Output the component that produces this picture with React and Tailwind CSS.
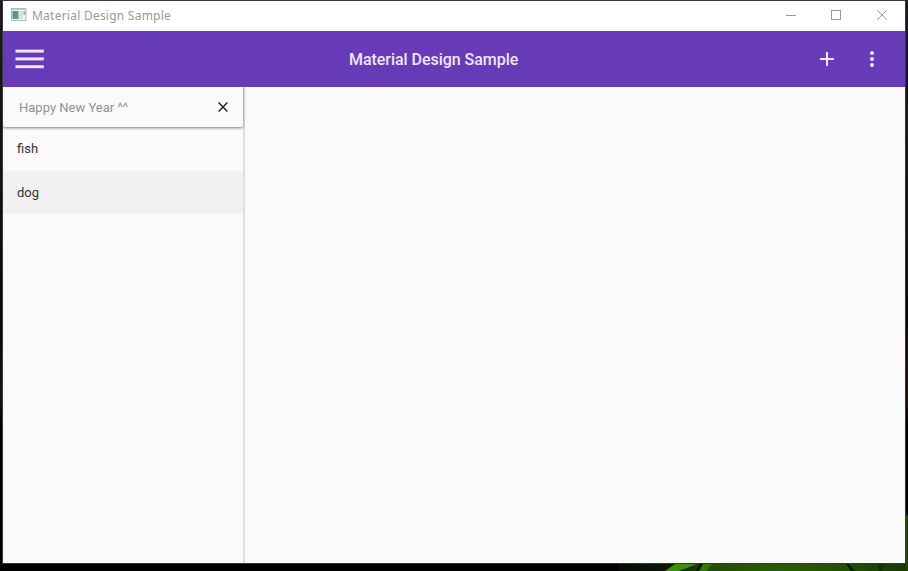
import React from "react";

function Wallpaper() {
  return (
    <svg className="absolute inset-0" width="908" height="571" aria-hidden="true">
      <defs>
        <linearGradient id="side" x1="0" y1="0" x2="0" y2="1">
          <stop offset="0" stopColor="#1b1b20" />
          <stop offset="0.35" stopColor="#101114" />
          <stop offset="0.55" stopColor="#0c0806" />
          <stop offset="0.7" stopColor="#1d0f08" />
          <stop offset="0.75" stopColor="#000000" />
          <stop offset="1" stopColor="#000000" />
        </linearGradient>
        <linearGradient id="leaf" x1="0" y1="0" x2="1" y2="0">
          <stop offset="0" stopColor="#050a02" />
          <stop offset="0.18" stopColor="#0c1606" />
          <stop offset="0.3" stopColor="#234a0a" />
          <stop offset="0.55" stopColor="#2c5a06" />
          <stop offset="0.8" stopColor="#244d05" />
          <stop offset="1" stopColor="#173803" />
        </linearGradient>
      </defs>
      <rect width="908" height="571" fill="url(#side)" />
      <rect x="618" y="564" width="290" height="7" fill="url(#leaf)" />
      <path d="M675 564h22l-18 7h-14z" fill="#418c0c" />
      <path d="M703 564h9l-6 7h-7z" fill="#35790a" />
      <path d="M699 564h4l-4 7h-3zM846 564h3l6 7h-4z" fill="#0a1c02" />
      <path d="M878 564h8l-4 7h-3z" fill="#133004" />
      <rect x="906" y="515" width="2" height="56" fill="#1d4405" />
    </svg>
  );
}

function TitleBar() {
  return (
    <div className="flex h-[30px] items-center bg-white text-[#999999]">
      <svg className="mb-0.5 ml-2 shrink-0" width="16" height="14" viewBox="0 0 16 14">
        <defs>
          <linearGradient id="pane" x1="0" y1="0" x2="1" y2="1">
            <stop offset="0" stopColor="#5a86ad" />
            <stop offset="1" stopColor="#55a377" />
          </linearGradient>
        </defs>
        <rect x="0.5" y="0.5" width="14.5" height="12" fill="#f4f4f4" stroke="#b3b8bc" />
        <rect x="1" y="1" width="14" height="1" fill="#c9cdd1" />
        <rect x="1.5" y="3" width="6" height="8" fill="url(#pane)" />
        <rect x="8" y="3" width="4" height="8" fill="#dedede" />
        <rect x="12.5" y="3" width="2" height="4" fill="#8fb8a0" />
      </svg>
      <span className="ml-[5px] whitespace-nowrap font-['Noto_Sans',sans-serif] text-[12px] leading-[16px] tracking-[0.24px]">
        Material Design Sample
      </span>
      <svg className="mb-0.5 ml-auto mr-[17px]" width="102" height="10" fill="none" stroke="#999999" shapeRendering="crispEdges">
        <path d="M0 5.5h10" />
        <rect x="45.5" y="0.5" width="9" height="9" />
        <path d="M91.2 0.2l9.6 9.6M100.8 0.2l-9.6 9.6" shapeRendering="auto" />
      </svg>
    </div>
  );
}

function AppBar() {
  return (
    <div className="flex h-14 items-center bg-[#673ab7] text-[#ede7f6]">
      <svg className="ml-3 shrink-0" width="30" height="20" fill="currentColor">
        <rect x="0.5" y="0.6" width="28.3" height="3" />
        <rect x="0.5" y="8.4" width="28.3" height="3" />
        <rect x="0.5" y="16.2" width="28.3" height="3" />
      </svg>
      <h1 className="ml-[304px] whitespace-nowrap pt-0.5 text-[16px] font-medium leading-5 tracking-[-0.04px]">
        Material Design Sample
      </h1>
      <svg className="ml-auto" width="14" height="14" fill="currentColor">
        <path d="M6 0h2v6h6v2H8v6H6V8H0V6h6z" />
      </svg>
      <svg className="ml-[35px] mr-[30px]" width="6" height="18" fill="currentColor">
        <circle cx="3" cy="3" r="2" />
        <circle cx="3" cy="9" r="2" />
        <circle cx="3" cy="15" r="2" />
      </svg>
    </div>
  );
}

function Sidebar() {
  return (
    <aside className="w-[242px] shrink-0 border-r-2 border-[#e0e0e0] text-[13px] text-[#333333]">
      <div className="relative flex h-10 items-center justify-between rounded-b-[2px] bg-[#fafafa] pl-4 pr-[15px] shadow-[0_1px_3px_rgba(0,0,0,0.5)] [clip-path:inset(0_-3px_-5px_0)]">
        <span className="whitespace-nowrap pt-0.5 text-[#929292]">Happy New Year ^^</span>
        <svg width="10" height="10" stroke="#212121" strokeWidth="1.4">
          <path d="M0.6 0.6l8.8 8.8M9.4 0.6l-8.8 8.8" />
        </svg>
      </div>
      <div className="flex h-11 items-center pl-3.5">fish</div>
      <div className="flex h-[43px] items-center bg-[#f1f1f1] pl-3.5">dog</div>
    </aside>
  );
}

export default function App() {
  return (
    <div className="relative h-[571px] w-[908px] overflow-hidden bg-black pl-0.5 font-[Roboto,sans-serif]">
      <Wallpaper />
      <div className="relative flex h-[564px] w-[904px] flex-col border border-[#38383a] bg-[#fafafa]">
        <TitleBar />
        <AppBar />
        <div className="flex min-h-0 flex-1">
          <Sidebar />
          <main className="flex-1" />
        </div>
      </div>
    </div>
  );
}
